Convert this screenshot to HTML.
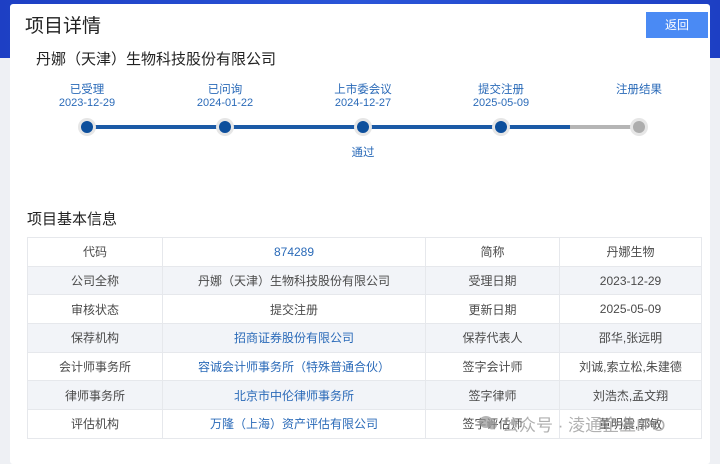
<!DOCTYPE html>
<html><head><meta charset="utf-8"><style>
*{margin:0;padding:0;box-sizing:border-box}
body{width:720px;height:452px;overflow:hidden;font-family:"Liberation Sans","Noto Sans CJK SC",sans-serif;background:#eef0f4;position:relative}
.hdr{position:absolute;left:0;top:0;width:720px;height:58px;background:linear-gradient(90deg,#1d3fc4,#2a55d8 50%,#1d3fc4)}
.card{position:absolute;left:10px;top:4px;width:700px;height:460px;background:#fff;border-radius:3px}
.t{position:absolute;white-space:nowrap}
.btn{position:absolute;left:646px;top:12px;width:62px;height:26px;background:#4a8af4;color:#fff;font-size:12px;text-align:center;line-height:26px}
.lbl{color:#2a6ab8;font-size:11.5px;text-align:center;width:100px}
table{position:absolute;left:27px;top:237px;border-collapse:collapse;font-size:12px;color:#4a4a4a}
td{height:28.7px;text-align:center;border:1px solid #e6e8ec;padding:0}
tr:nth-child(even) td{background:#f2f4f8}
.b{color:#2a6ab8}
</style></head><body>
<div class="hdr"></div>
<div class="card"></div>
<div class="t" style="left:25px;top:11px;font-size:19px;color:#222">项目详情</div>
<div class="btn">返回</div>
<div class="t" style="left:36px;top:48px;font-size:15px;color:#222">丹娜（天津）生物科技股份有限公司</div>
<div class="t lbl" style="left:37px;top:81px">已受理</div>
<div class="t lbl" style="left:37px;top:97px;font-size:11px">2023-12-29</div>
<div class="t lbl" style="left:175px;top:81px">已问询</div>
<div class="t lbl" style="left:175px;top:97px;font-size:11px">2024-01-22</div>
<div class="t lbl" style="left:313px;top:81px">上市委会议</div>
<div class="t lbl" style="left:313px;top:97px;font-size:11px">2024-12-27</div>
<div class="t lbl" style="left:451px;top:81px">提交注册</div>
<div class="t lbl" style="left:451px;top:97px;font-size:11px">2025-05-09</div>
<div class="t lbl" style="left:589px;top:81px">注册结果</div>
<div class="t lbl" style="left:313px;top:144px">通过</div>
<svg class="t" style="left:0;top:0" width="720" height="180">
<line x1="87" y1="127" x2="570" y2="127" stroke="#1b5aa6" stroke-width="4"/>
<line x1="570" y1="127" x2="639" y2="127" stroke="#b5b5b5" stroke-width="4"/>
<g fill="#e6e6e6"><circle cx="87" cy="127" r="9"/><circle cx="225" cy="127" r="9"/><circle cx="363" cy="127" r="9"/><circle cx="501" cy="127" r="9"/><circle cx="639" cy="127" r="9"/></g>
<g fill="#0d4f9c"><circle cx="87" cy="127" r="6"/><circle cx="225" cy="127" r="6"/><circle cx="363" cy="127" r="6"/><circle cx="501" cy="127" r="6"/></g>
<circle cx="639" cy="127" r="6" fill="#adadad"/>
</svg>
<div class="t" style="left:27px;top:208px;font-size:15px;color:#222">项目基本信息</div>
<table>
<colgroup><col style="width:135px"><col style="width:263px"><col style="width:134px"><col style="width:142px"></colgroup>
<tr><td>代码</td><td class="b">874289</td><td>简称</td><td>丹娜生物</td></tr>
<tr><td>公司全称</td><td>丹娜（天津）生物科技股份有限公司</td><td>受理日期</td><td>2023-12-29</td></tr>
<tr><td>审核状态</td><td>提交注册</td><td>更新日期</td><td>2025-05-09</td></tr>
<tr><td>保荐机构</td><td class="b">招商证券股份有限公司</td><td>保荐代表人</td><td>邵华,张远明</td></tr>
<tr><td>会计师事务所</td><td class="b">容诚会计师事务所（特殊普通合伙）</td><td>签字会计师</td><td>刘诚,索立松,朱建德</td></tr>
<tr><td>律师事务所</td><td class="b">北京市中伦律师事务所</td><td>签字律师</td><td>刘浩杰,孟文翔</td></tr>
<tr><td>评估机构</td><td class="b">万隆（上海）资产评估有限公司</td><td>签字评估师</td><td>董明震,郭敏</td></tr>
</table>
<svg class="t" style="left:478px;top:414px" width="20" height="18"><g fill="rgba(150,150,150,0.7)"><ellipse cx="8" cy="8" rx="7" ry="6"/><ellipse cx="14" cy="11" rx="5" ry="4.5"/></g></svg>
<div class="t" style="left:502px;top:411px;font-size:17px;color:rgba(150,150,150,0.75)">公众号 · 淩通企业IPO</div>
</body></html>
